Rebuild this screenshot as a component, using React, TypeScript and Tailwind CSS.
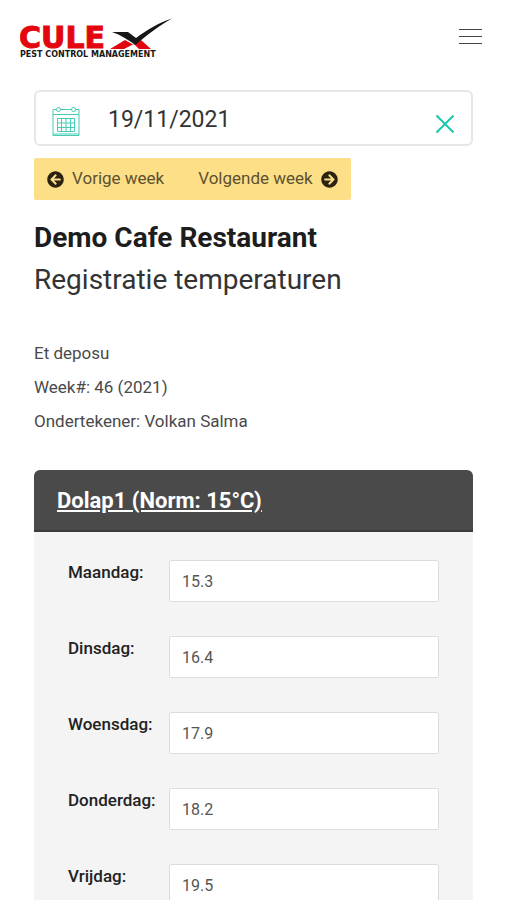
import { useState } from 'react';
import { FaArrowCircleLeft, FaArrowCircleRight } from 'react-icons/fa';

const days = [
  { id: 'maandag', label: 'Maandag:', value: '15.3' },
  { id: 'dinsdag', label: 'Dinsdag:', value: '16.4' },
  { id: 'woensdag', label: 'Woensdag:', value: '17.9' },
  { id: 'donderdag', label: 'Donderdag:', value: '18.2' },
  { id: 'vrijdag', label: 'Vrijdag:', value: '19.5' },
];

function Logo() {
  return (
    <svg width="154" height="44" viewBox="0 0 154 44" role="img" aria-label="Culex Pest Control Management">
      <text x="-1" y="32" fill="#e3060f" fontSize="30" fontWeight="700" stroke="#e3060f" strokeWidth="1" fontFamily="'DejaVu Sans', sans-serif">CULE</text>
      <path d="M90 33 L105 24 L114 29 L121 24 L131 33 H119 L114 28 L104 33 Z" fill="#e3060f" />
      <path d="M92 16 H108 L116 22 C127 14 138 7 152 2.500 C139 10 128 18 115.500 29 C108 24 101 19 92 16 Z" fill="#171717" />
      <text x="0" y="41" fill="#171717" fontSize="8" fontWeight="700" fontFamily="'DejaVu Sans', sans-serif">PEST CONTROL MANAGEMENT</text>
    </svg>
  );
}

function IconCalendar() {
  return (
    <svg className="mt-2 shrink-0" width="28" height="30" viewBox="0 0 28 30" fill="none" stroke="#45cdb4" aria-hidden="true">
      <path d="M4.500 2.500H1v26h26v-26h-3.500M8.500 2.500h11M1 7.500h26M1 27h26" />
      <circle cx="6.500" cy="2.500" r="2" />
      <circle cx="21.500" cy="2.500" r="2" />
      <path d="M5.500 11.500h17v13h-17zM5.500 16h17M5.500 20.500h17M9.500 11.500v13M14 11.500v13M18.500 11.500v13" />
    </svg>
  );
}

function DayRow({ id, label, value }: { id: string; label: string; value: string }) {
  return (
    <div className="flex items-start">
      <label htmlFor={id} className="w-[101px] shrink-0 text-[17px] leading-6 font-medium text-[#222222]">
        {label}
      </label>
      <input
        id={id}
        type="text"
        defaultValue={value}
        className="h-[42px] min-w-0 flex-1 rounded-xs border border-[#dcdcdc] bg-white px-3 text-base text-[#555555]"
      />
    </div>
  );
}

export default function App() {
  const [date, setDate] = useState('19/11/2021');

  return (
    <div className="h-screen overflow-hidden bg-white font-['Roboto',sans-serif] text-[#4a4a4a]">
      <header className="flex items-start justify-between pt-4 pr-6 pl-5">
        <a href="#">
          <Logo />
        </a>
        <button type="button" aria-label="Menu" className="mt-[13px] flex flex-col gap-[6px]">
          <span className="h-px w-[23px] bg-[#444444]" />
          <span className="h-px w-[23px] bg-[#444444]" />
          <span className="h-px w-[23px] bg-[#444444]" />
        </button>
      </header>

      <main className="pt-[30px] pr-[33px] pl-[34px]">
        <div className="flex h-14 items-center rounded-md border-2 border-[#e6e6e6] px-4">
          <IconCalendar />
          <input
            type="text"
            aria-label="Datum"
            value={date}
            onChange={(e) => setDate(e.target.value)}
            className="ml-7 min-w-0 flex-1 pt-1 text-[23px] text-[#333333]"
          />
          <button type="button" aria-label="Wissen" className="mt-3" onClick={() => setDate('')}>
            <svg width="20" height="20" viewBox="0 0 20 20" fill="none" stroke="#1bc5ae" strokeWidth="2">
              <path d="M1.500 1.500l17 17M18.500 1.500l-17 17" />
            </svg>
          </button>
        </div>

        <div className="mt-3 inline-flex h-[42px] rounded-xs bg-[#fddf88] text-[17px] text-[#5d5130]">
          <button type="button" className="flex items-center gap-2 px-[13px]">
            <FaArrowCircleLeft className="size-[17px] text-[#2b2310]" />
            Vorige week
          </button>
          <button type="button" className="ml-2 flex items-center gap-2 px-[13px]">
            Volgende week
            <FaArrowCircleRight className="size-[17px] text-[#2b2310]" />
          </button>
        </div>

        <h1 className="mt-5 text-[28px] leading-9 font-bold text-[#1d1d1d]">Demo Cafe Restaurant</h1>
        <h2 className="mt-[6px] text-[28px] leading-9 text-[#333333]">Registratie temperaturen</h2>

        <div className="mt-[43px] flex flex-col gap-[10px] text-[17px] leading-6">
          <p>Et deposu</p>
          <p>Week#: 46 (2021)</p>
          <p>Ondertekener: Volkan Salma</p>
        </div>

        <section className="mt-[37px] rounded-t-md bg-[#f4f4f4]">
          <header className="flex h-[62px] items-center rounded-t-md border-b-2 border-[#3a3a3a] bg-[#4a4a4a] px-[23px]">
            <a href="#" className="text-[22px] font-bold text-white underline">
              Dolap1 (Norm: 15°C)
            </a>
          </header>
          <div className="flex flex-col gap-[34px] px-[34px] pt-7 pb-8">
            {days.map((day) => (
              <DayRow key={day.id} {...day} />
            ))}
          </div>
        </section>
      </main>
    </div>
  );
}
